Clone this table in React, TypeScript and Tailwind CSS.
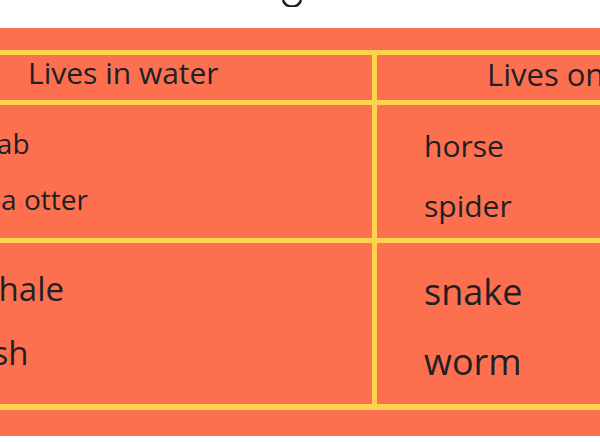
import React from "react";

const font = { fontFamily: '"Open Sans", "Noto Sans", sans-serif' };

export default function App() {
  return (
    <div
      className="w-[600px] h-[442px] overflow-hidden bg-white text-[#1e2024]"
      style={font}
    >
      <div className="h-[28px] flex items-start">
        <svg className="ml-[281px]" width="22" height="7" viewBox="0 0 22 7">
          <path
            d="M2 0 A 9.5 9.5 0 0 0 20 0"
            fill="none"
            stroke="#1e2024"
            strokeWidth="2.4"
          />
        </svg>
      </div>
      <div className="bg-[#fc7050] pt-[22px] pb-[26px]">
        <div className="ml-[-79px] w-[907px] grid grid-cols-[446px_446px] grid-rows-[45px_133px_161px] gap-[5px] bg-[#ffd34d] px-[5px] pt-[5px] pb-[6px]">
          <div className="bg-[#fc7050] pl-[102px] pt-[3px] text-[30px] leading-[30px] whitespace-nowrap">
            Lives in water
          </div>
          <div className="bg-[#fc7050] pl-[110px] pt-[4px] text-[31px] leading-[31px] whitespace-nowrap">
            Lives on land
          </div>
          <div className="bg-[#fc7050] pl-[46px] pt-[10px] text-[28px] leading-[56px] whitespace-nowrap">
            <div>crab</div>
            <div>sea otter</div>
          </div>
          <div className="bg-[#fc7050] pl-[47px] pt-[11px] text-[30px] leading-[60px] whitespace-nowrap">
            <div>horse</div>
            <div>spider</div>
          </div>
          <div className="bg-[#fc7050] pl-[47px] pt-[14px] text-[33px] leading-[64px] whitespace-nowrap">
            <div>whale</div>
            <div>fish</div>
          </div>
          <div className="bg-[#fc7050] pl-[47px] pt-[14px] text-[36px] leading-[70px] whitespace-nowrap">
            <div>snake</div>
            <div>worm</div>
          </div>
        </div>
      </div>
    </div>
  );
}
